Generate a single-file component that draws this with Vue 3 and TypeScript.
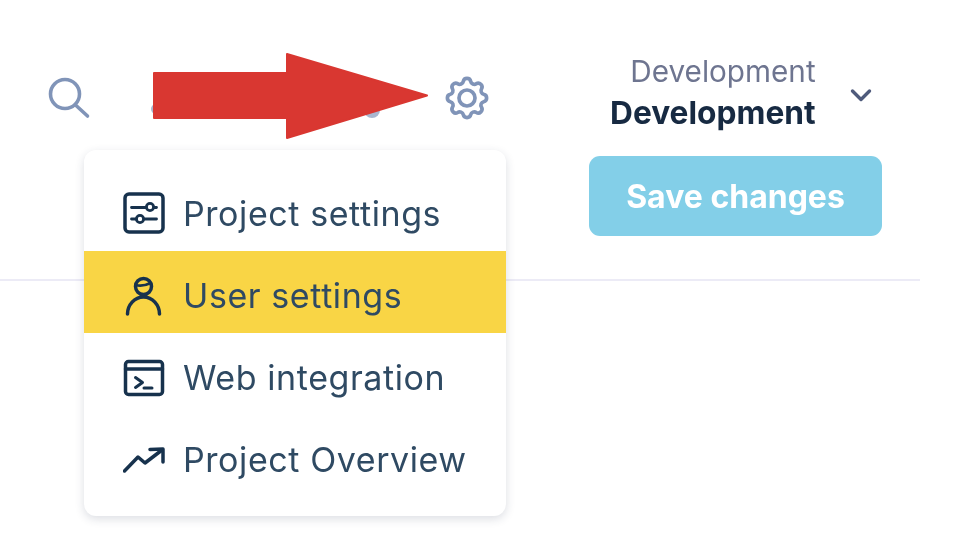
<template>
  <div class="page">
    <div class="toolbar">
      <div class="tools">
        <button class="tool-btn search-btn" aria-label="Search">
          <svg width="44" height="44" viewBox="0 0 44 44" fill="none" stroke="currentColor" stroke-width="3.6" stroke-linecap="round">
            <circle cx="18" cy="18" r="14.5" />
            <path d="M28.500 29L40.500 40" />
          </svg>
        </button>
        <span class="tool-dot"></span>
        <span class="tool-dot second"></span>
        <button class="tool-btn gear-btn" aria-label="Settings">
          <svg width="52" height="52" viewBox="0 0 24 24" fill="none" stroke="currentColor" stroke-width="1.7" stroke-linecap="round" stroke-linejoin="round">
            <path d="M10.3 4.3c.4-1.8 3-1.8 3.4 0a1.7 1.7 0 0 0 2.6 1.1c1.5-.9 3.3.8 2.4 2.4a1.7 1.7 0 0 0 1 2.5c1.8.4 1.8 3 0 3.4a1.7 1.7 0 0 0-1 2.6c.9 1.5-.9 3.3-2.4 2.4a1.7 1.7 0 0 0-2.6 1c-.4 1.8-3 1.8-3.4 0a1.7 1.7 0 0 0-2.6-1c-1.5.9-3.3-.9-2.4-2.4a1.7 1.7 0 0 0-1-2.6c-1.8-.4-1.8-3 0-3.4a1.7 1.7 0 0 0 1-2.5c-.9-1.6.9-3.3 2.4-2.4a1.7 1.7 0 0 0 2.6-1.1z" />
            <circle cx="12" cy="12" r="3.7" />
          </svg>
        </button>
      </div>
      <div class="env-col">
        <div class="env">
          <div class="env-text">
            <span class="env-label">Development</span>
            <span class="env-value">Development</span>
          </div>
          <svg class="chevron" width="22" height="14" viewBox="0 0 22 14" fill="none" stroke="currentColor" stroke-width="3.4" stroke-linecap="round" stroke-linejoin="round">
            <path d="M2.500 3l8.500 8.500 8.500-8.500" />
          </svg>
        </div>
        <button class="save-btn">Save changes</button>
      </div>
    </div>
    <div class="divider"></div>

    <div class="menu">
      <div v-for="item in items" :key="item.label" class="menu-item" :class="{ active: item.active }">
        <svg class="menu-icon" width="42" height="42" viewBox="0 0 42 42" fill="none" stroke="currentColor" stroke-width="3.5" stroke-linecap="round" stroke-linejoin="round">
          <template v-if="item.icon === 'sliders'">
            <rect x="2" y="2" width="38" height="38" rx="4" />
            <path d="M8.500 15.500H23M31 15.500h2.500M8.500 27H13.500M21 27H33.500" stroke-width="2.8" />
            <circle cx="27" cy="15" r="3.6" stroke-width="2.8" />
            <circle cx="17" cy="27" r="3.6" stroke-width="2.8" />
          </template>
          <template v-else-if="item.icon === 'user'">
            <circle cx="20.500" cy="12.500" r="8" />
            <path d="M12.500 11c5 1.500 11 0 15-2" stroke-width="2.8" />
            <path d="M4.500 40c0-9 7-17 16-17s16 8 16 17" />
          </template>
          <template v-else-if="item.icon === 'terminal'">
            <rect x="2.500" y="5.500" width="37" height="33" rx="3" />
            <path d="M2.500 13h37" />
            <path d="M12.500 21.500l7 5-7 5M21 32h8" stroke-width="3" />
          </template>
          <template v-else>
            <path d="M1.500 33L15 19l7 6 17-13" />
            <path d="M27 11.500l13-.5v13" />
          </template>
        </svg>
        <span>{{ item.label }}</span>
      </div>
    </div>

    <svg class="arrow" width="278" height="88" viewBox="0 0 278 88">
      <path d="M2 21H135V2L275 43.500 135 86V66H2z" fill="#d93731" stroke="#d93731" stroke-width="2" stroke-linejoin="round" />
    </svg>
  </div>
</template>

<script setup lang="ts">
interface MenuItem {
  label: string;
  icon: "sliders" | "user" | "terminal" | "trend";
  active?: boolean;
}

const items: MenuItem[] = [
  { label: "Project settings", icon: "sliders" },
  { label: "User settings", icon: "user", active: true },
  { label: "Web integration", icon: "terminal" },
  { label: "Project Overview", icon: "trend" },
];
</script>

<style>
html,
body {
  margin: 0;
  background: #fff;
}
</style>

<style scoped>
.page {
  position: relative;
  width: 961px;
  height: 554px;
  overflow: hidden;
  background: #fff;
  font-family: Inter, "Liberation Sans", sans-serif;
  filter: blur(0.6px);
}
.toolbar {
  display: flex;
  justify-content: space-between;
  height: 279px;
  box-sizing: border-box;
  padding: 54px 79px 0 47px;
}
.tools {
  position: relative;
  width: 442px;
  height: 90px;
}
.tool-btn {
  position: absolute;
  padding: 0;
  border: 0;
  background: none;
  color: #8094b8;
  line-height: 0;
}
.search-btn {
  left: 0;
  top: 22px;
}
.gear-btn {
  left: 394px;
  top: 18px;
}
.tool-dot {
  position: absolute;
  left: 104px;
  top: 50px;
  width: 10px;
  height: 10px;
  border-radius: 50%;
  background: #a9b6cf;
}
.tool-dot.second {
  left: 317px;
  top: 48px;
  width: 16px;
  height: 16px;
}
.env-col {
  display: flex;
  flex-direction: column;
  width: 293px;
}
.env {
  display: flex;
  align-items: center;
  height: 76px;
  margin-bottom: 26px;
  padding-left: 21px;
  gap: 34px;
}
.env-text {
  display: flex;
  flex-direction: column;
  align-items: flex-end;
  line-height: 42px;
}
.env-label {
  font-size: 29.700px;
  color: #6e7590;
}
.env-value {
  font-size: 31.700px;
  font-weight: 700;
  color: #172a42;
}
.chevron {
  color: #4f5b7c;
  margin-top: 5px;
}
.save-btn {
  width: 293px;
  height: 80px;
  padding: 0;
  border: 0;
  border-radius: 11px;
  background: #83cfe8;
  color: #fff;
  font-family: inherit;
  font-size: 32px;
  font-weight: 700;
}
.divider {
  height: 2px;
  width: 920px;
  background: #ecebf6;
}
.menu {
  position: absolute;
  left: 84px;
  top: 150px;
  width: 422px;
  height: 366px;
  box-sizing: border-box;
  padding-top: 19px;
  background: #fff;
  border-radius: 12px;
  box-shadow: 0 3px 10px rgba(40, 50, 80, 0.16);
}
.menu-item {
  display: flex;
  align-items: center;
  gap: 18px;
  box-sizing: border-box;
  height: 82px;
  padding: 6px 0 0 39px;
  color: #17324d;
  font-size: 34px;
  letter-spacing: 0.58px;
}
.menu-item.active {
  background: #f9d545;
}
.menu-item span {
  color: #2f4a63;
}
.arrow {
  position: absolute;
  left: 152px;
  top: 52px;
}
</style>
